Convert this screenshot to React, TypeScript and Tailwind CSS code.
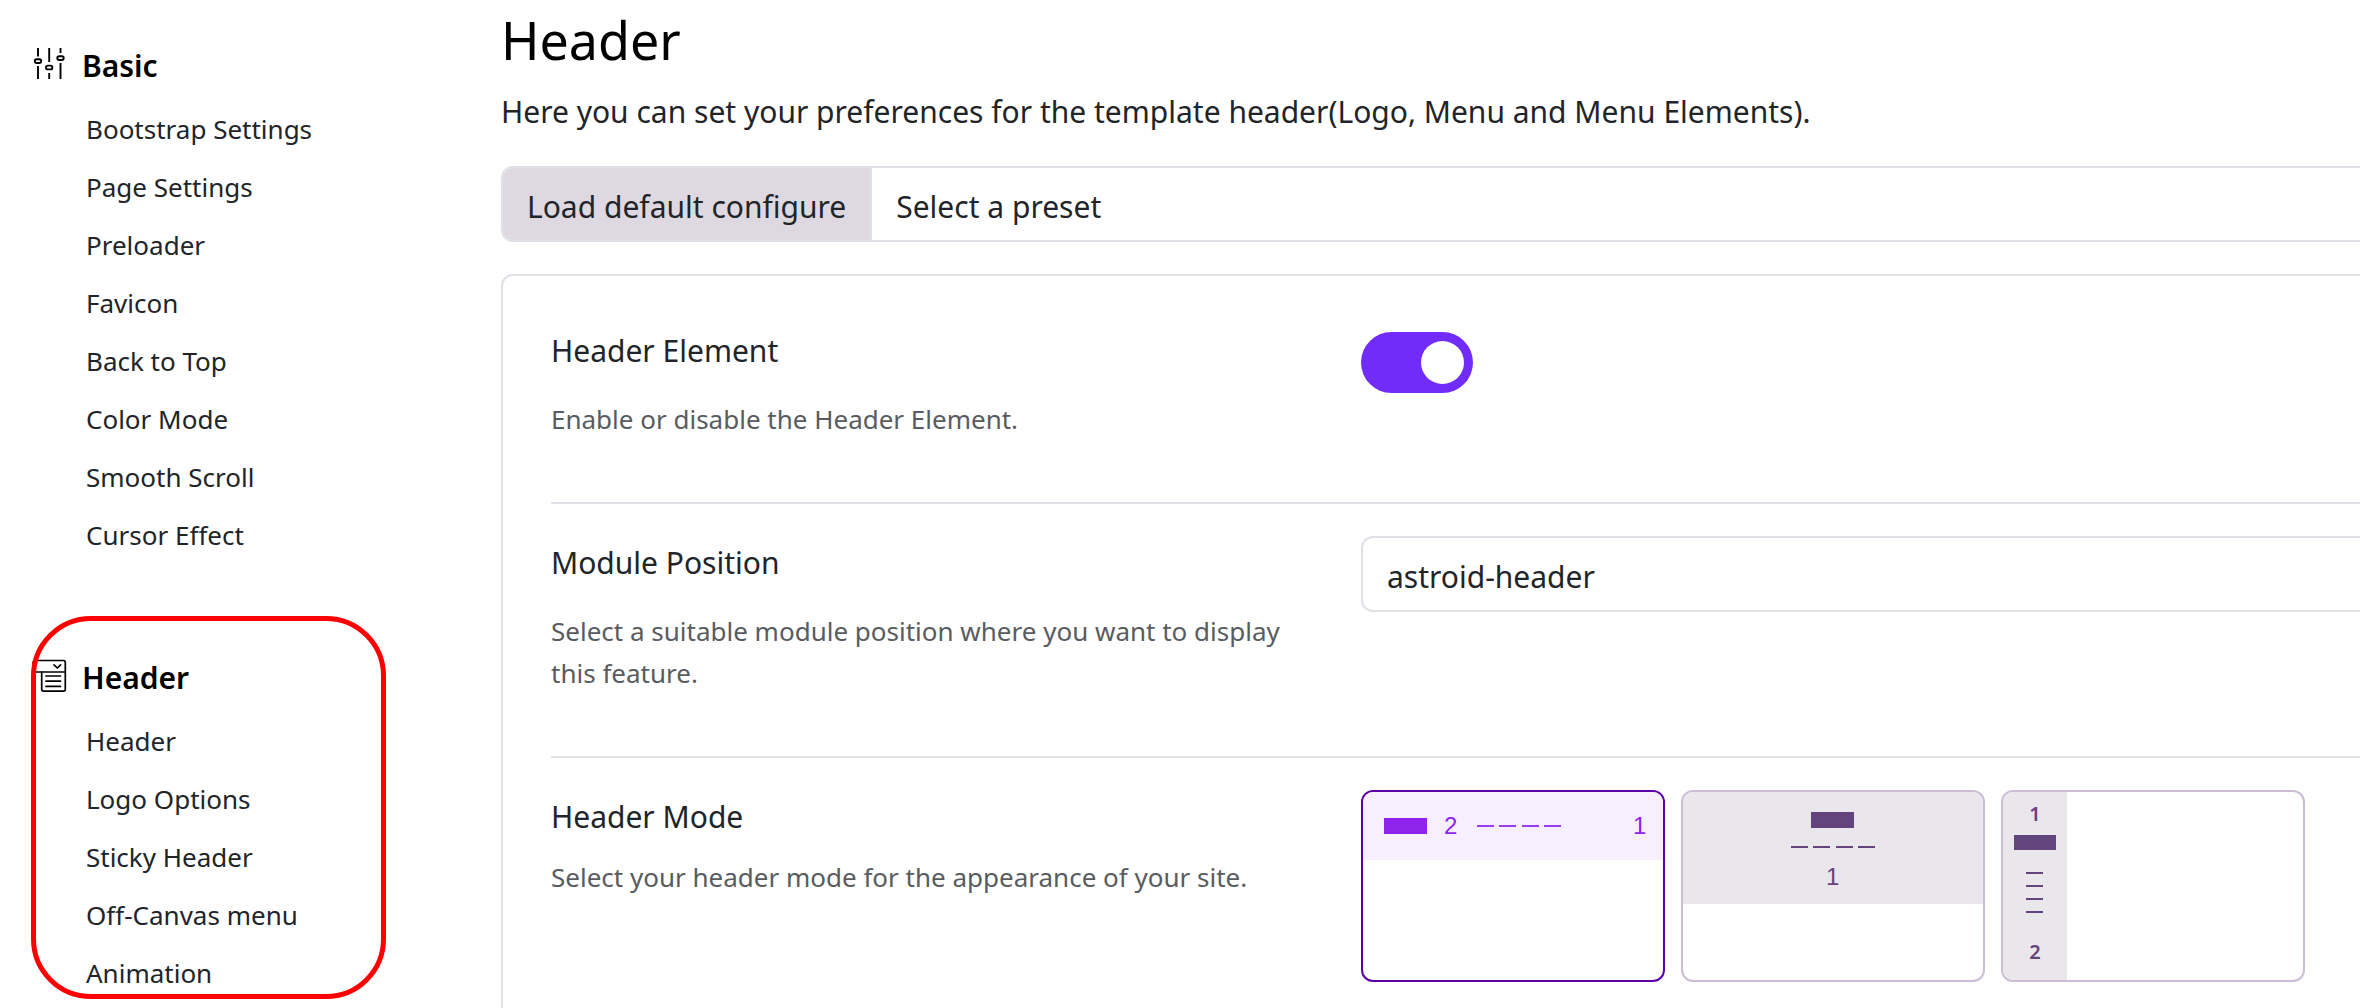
import type { ReactNode } from "react";

const basicItems = [
  "Bootstrap Settings",
  "Page Settings",
  "Preloader",
  "Favicon",
  "Back to Top",
  "Color Mode",
  "Smooth Scroll",
  "Cursor Effect",
];

const headerItems = ["Header", "Logo Options", "Sticky Header", "Off-Canvas menu", "Animation"];

function SlidersIcon() {
  return (
    <svg className="w-9 h-9 shrink-0" viewBox="0 0 36 36" fill="none" stroke="#000" strokeWidth="1.9">
      <path d="M6 3v8.500M6 21v13M17.200 3v14M17.200 28v6M28.500 3v5M28.500 18v16" />
      <rect x="2.8" y="14.2" width="6.4" height="3.8" rx="1.9" />
      <rect x="14" y="20.6" width="6.4" height="3.8" rx="1.9" />
      <rect x="25.3" y="11.2" width="6.4" height="3.8" rx="1.9" />
    </svg>
  );
}

function HeaderIcon() {
  return (
    <svg className="w-9 h-9 shrink-0" viewBox="0 0 36 36" fill="none" stroke="#000" strokeWidth="1.7" strokeLinecap="round" strokeLinejoin="round">
      <path d="M3 3.5h28.5a1.8 1.8 0 0 1 1.8 1.8v27a1.8 1.8 0 0 1-1.8 1.8h-20a1.8 1.8 0 0 1-1.8-1.8V15" />
      <path d="M33 15H3a1.8 1.8 0 0 1-1.8-1.8V5.3a1.8 1.8 0 0 1 1.8-1.8" />
      <path d="M22 7.800l3.300 3.200 3.300-3.200" />
      <path d="M14 19h14.500M14 24.200h14.500M14 29.400h14.500" />
    </svg>
  );
}

function MenuGroup({ icon, title, items }: { icon: ReactNode; title: string; items: string[] }) {
  return (
    <div>
      <h2 className="flex items-center gap-[14px] h-12 text-[30px] font-semibold text-black">
        {icon}
        <span className="pt-1">{title}</span>
      </h2>
      <ul className="pt-[13px] pl-[54px]">
        {items.map((item) => (
          <li key={item}>
            <a href="#" className="block h-[58px] text-[26px] leading-[58px]">
              {item}
            </a>
          </li>
        ))}
      </ul>
    </div>
  );
}

function HorizontalMode() {
  return (
    <svg className="block w-full" viewBox="0 0 300 188">
      <rect width="300" height="68" fill="#f7efff" />
      <rect x="21" y="26" width="43" height="16" fill="#8f23ec" />
      <path d="M114 34h17M136 34h17M159 34h17M181 34h17" stroke="#9b3cf0" strokeWidth="2" />
      <g fill="#8f23ec" fontFamily="Liberation Sans, sans-serif" fontSize="24">
        <text x="81" y="42">2</text>
        <text x="270" y="42">1</text>
      </g>
    </svg>
  );
}

function StackedMode() {
  return (
    <svg className="block w-full" viewBox="0 0 300 188">
      <rect width="300" height="112" fill="#e9e6ec" />
      <rect x="128" y="20" width="43" height="16" fill="#63447c" />
      <path d="M108 55h17M130 55h17M153 55h17M175 55h17" stroke="#63447c" strokeWidth="2" />
      <text x="143" y="93" fill="#63447c" fontFamily="Liberation Sans, sans-serif" fontSize="24">1</text>
    </svg>
  );
}

function SidebarMode() {
  return (
    <svg className="block w-full" viewBox="0 0 300 188">
      <rect width="64" height="188" fill="#e9e6ec" />
      <rect x="11" y="43" width="42" height="15" fill="#63447c" />
      <path d="M23 81h17M23 94h17M23 107h17M23 120h17" stroke="#63447c" strokeWidth="2" />
      <g fill="#63447c" fontFamily="Noto Sans, sans-serif" fontSize="20" fontWeight="600" textAnchor="middle">
        <text x="32" y="29">1</text>
        <text x="32" y="167">2</text>
      </g>
    </svg>
  );
}

const modes = [
  { id: "horizontal", picture: <HorizontalMode /> },
  { id: "stacked", picture: <StackedMode /> },
  { id: "sidebar", picture: <SidebarMode /> },
];

function App() {
  return (
    <div className="flex min-h-screen max-h-screen overflow-hidden bg-white font-['Noto_Sans',sans-serif] text-[#212529]">
      {/* Sidebar */}
      <nav className="relative w-[501px] shrink-0 pt-[39px] pl-8">
        <MenuGroup icon={<SlidersIcon />} title="Basic" items={basicItems} />
        <div className="mt-[87px]">
          <MenuGroup icon={<HeaderIcon />} title="Header" items={headerItems} />
        </div>
        {/* Highlight around the header group */}
        <div className="absolute top-[616px] left-[31px] w-[355px] h-[383px] border-[5px] border-[#ff0000] rounded-[60px] pointer-events-none"></div>
      </nav>

      {/* Content */}
      <main className="flex-1 min-w-0">
        <h1 className="text-[52px] leading-[80px] text-black">Header</h1>
        <p className="mt-[6px] text-[30px] leading-[52px] whitespace-nowrap">
          Here you can set your preferences for the template header(Logo, Menu and Menu Elements).
        </p>

        <div className="flex mt-7 h-[76px] border-2 border-r-0 border-[#dee2e6] rounded-l-xl overflow-hidden text-[30px]">
          <button type="button" className="px-6 pt-1 bg-[#ded9e0] border-r-2 border-[#dee2e6] whitespace-nowrap">
            Load default configure
          </button>
          <select aria-label="Preset" className="flex-1 px-6 pt-1 bg-white appearance-none">
            <option>Select a preset</option>
          </select>
        </div>

        <div className="mt-8 pt-4 pl-12 border-2 border-r-0 border-[#dee2e6] rounded-tl-xl">
          <div className="grid grid-cols-[810px_1fr] pt-8 pb-[62px] border-b-2 border-[#dee2e6]">
            <div className="pr-12">
              <label htmlFor="header-element" className="block text-[30px] leading-[54px]">
                Header Element
              </label>
              <p className="mt-5 text-[26px] leading-[42px] text-[#595c5f]">Enable or disable the Header Element.</p>
            </div>
            <input
              id="header-element"
              type="checkbox"
              role="switch"
              defaultChecked
              className="flex items-center justify-end w-28 h-[61px] mt-2 px-[9px] bg-[#712cf9] rounded-full appearance-none before:w-[43px] before:h-[43px] before:bg-white before:rounded-full"
            />
          </div>

          <div className="grid grid-cols-[810px_1fr] pt-8 pb-[62px] border-b-2 border-[#dee2e6]">
            <div className="pr-12">
              <label htmlFor="module-position" className="block text-[30px] leading-[54px]">
                Module Position
              </label>
              <p className="mt-5 text-[26px] leading-[42px] text-[#595c5f]">
                Select a suitable module position where you want to display this feature.
              </p>
            </div>
            <select
              id="module-position"
              className="h-[76px] px-6 pt-1 text-[30px] bg-white border-2 border-r-0 border-[#dee2e6] rounded-l-xl appearance-none"
            >
              <option>astroid-header</option>
            </select>
          </div>

          <div className="grid grid-cols-[810px_1fr] pt-8 pb-16">
            <div className="pr-12">
              <h3 id="header-mode" className="text-[30px] leading-[54px]">
                Header Mode
              </h3>
              <p className="mt-3 text-[26px] leading-[42px] text-[#595c5f]">
                Select your header mode for the appearance of your site.
              </p>
            </div>
            <div role="radiogroup" aria-labelledby="header-mode" className="flex gap-4">
              {modes.map((mode, i) => (
                <label key={mode.id} className="w-[304px]">
                  <input type="radio" name="header-mode" aria-label={mode.id} defaultChecked={i === 0} className="sr-only peer" />
                  <div className="border-2 border-[#cbbdd6] rounded-xl overflow-hidden peer-checked:border-[#5e00a8]">
                    {mode.picture}
                  </div>
                </label>
              ))}
            </div>
          </div>
        </div>
      </main>
    </div>
  );
}

export default App;
